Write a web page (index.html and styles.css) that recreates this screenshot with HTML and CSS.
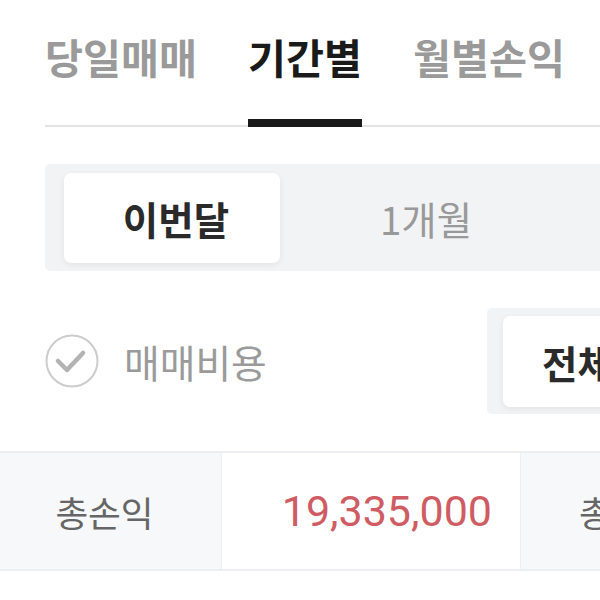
FILE: index.html
```html
<!DOCTYPE html>
<html lang="ko">
<head>
<meta charset="utf-8">
<link rel="stylesheet" href="styles.css">
</head>
<body>
<div class="page">
  <nav class="tabs">
    <div class="tab">당일매매</div>
    <div class="tab active">기간별</div>
    <div class="tab">월별손익</div>
  </nav>

  <div class="seg seg-period">
    <div class="seg-item on">이번달</div>
    <div class="seg-item">1개월</div>
  </div>

  <div class="filter-row">
    <div class="check">
      <svg class="check-icon" width="54" height="54" viewBox="0 0 54 54">
        <circle cx="27" cy="27" r="25.5" fill="none" stroke="#cccccc" stroke-width="2"/>
        <polyline points="13,27 22,36 38,19" fill="none" stroke="#b3b3b3" stroke-width="4.5" stroke-linecap="round" stroke-linejoin="round"/>
      </svg>
      <span class="check-label">매매비용</span>
    </div>
    <div class="seg seg-type">
      <div class="seg-item on">전체</div>
    </div>
  </div>

  <div class="summary">
    <div class="cell label">총손익</div>
    <div class="cell value">19,335,000</div>
    <div class="cell label2">총</div>
  </div>
</div>
</body>
</html>
```

FILE: styles.css
```css
html, body {
  margin: 0;
  padding: 0;
  background: #ffffff;
  overflow: hidden;
}
body {
  width: 600px;
  height: 600px;
  font-family: "Noto Sans CJK KR", "Noto Sans", sans-serif;
}
.page {
  width: 600px;
}
.tabs {
  display: flex;
  gap: 51px;
  margin-left: 45px;
  padding-top: 28px;
  border-bottom: 2px solid #e3e3e3;
}
.tab {
  font-size: 41.3px;
  font-weight: 700;
  line-height: 56px;
  color: #9a9a9a;
  padding-bottom: 35px;
  margin-bottom: -2px;
  border-bottom: 8px solid transparent;
  white-space: nowrap;
}
.tab.active {
  color: #1a1a1a;
  border-bottom-color: #1a1a1a;
}
.seg {
  display: flex;
  background: #f2f3f5;
  border-radius: 5px 0 0 5px;
}
.seg-period {
  margin: 37px 0 0 45px;
  padding: 9px 19px 8px;
  width: 700px;
}
.seg-item {
  width: 216px;
  height: 90px;
  display: flex;
  align-items: center;
  justify-content: center;
  font-size: 38.5px;
  color: #999999;
  white-space: nowrap;
  flex: none;
  box-sizing: border-box;
}
.seg-item + .seg-item {
  margin-left: 38px;
}
.seg-item.on {
  background: #ffffff;
  border-radius: 7px;
  font-weight: 700;
  color: #2a2a2a;
  box-shadow: 0 2px 6px rgba(0, 0, 0, 0.07);
}
.seg-period .seg-item.on {
  padding-left: 8px;
}
.filter-row {
  display: flex;
  align-items: center;
  margin: 37px 0 0 45px;
}
.check {
  display: flex;
  align-items: center;
  gap: 25px;
  width: 442px;
  flex: none;
}
.check-icon {
  display: block;
  flex: none;
}
.check-label {
  font-size: 38.8px;
  color: #9a9a9a;
  white-space: nowrap;
}
.seg-type {
  padding: 8px 16px 7px;
  width: 300px;
  flex: none;
}
.seg-type .seg-item {
  height: 91px;
  justify-content: flex-start;
  padding-left: 39px;
  font-size: 38.5px;
}
.summary {
  display: flex;
  margin-top: 37px;
  border-top: 2px solid #eceef1;
  border-bottom: 2px solid #eceef1;
  background: #f7f8fa;
  height: 116px;
}
.cell {
  display: flex;
  align-items: center;
  white-space: nowrap;
}
.label {
  width: 221px;
  box-sizing: border-box;
  justify-content: center;
  padding-right: 12px;
  font-size: 35.6px;
  color: #666666;
  flex: none;
}
.value {
  width: 270px;
  flex: none;
  justify-content: flex-end;
  padding-right: 28px;
  background: #ffffff;
  border-left: 1px solid #eceef1;
  border-right: 1px solid #eceef1;
  font-family: Roboto, "Noto Sans CJK KR", sans-serif;
  font-size: 43px;
  color: #cf5b63;
}
.label2 {
  padding-left: 58px;
  font-size: 35.6px;
  color: #666666;
}
```
